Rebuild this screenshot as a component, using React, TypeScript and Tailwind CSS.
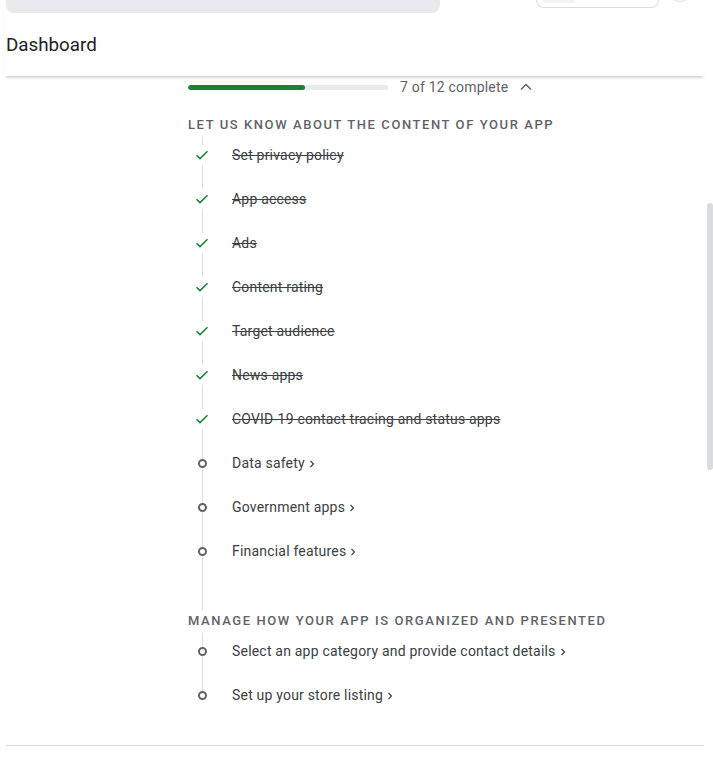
import React from "react";

type Item = { label: string; done: boolean };

const section1: Item[] = [
  { label: "Set privacy policy", done: true },
  { label: "App access", done: true },
  { label: "Ads", done: true },
  { label: "Content rating", done: true },
  { label: "Target audience", done: true },
  { label: "News apps", done: true },
  { label: "COVID-19 contact tracing and status apps", done: true },
  { label: "Data safety", done: false },
  { label: "Government apps", done: false },
  { label: "Financial features", done: false },
];

const section2: Item[] = [
  { label: "Select an app category and provide contact details", done: false },
  { label: "Set up your store listing", done: false },
];

function Check() {
  return (
    <svg width="14" height="12" viewBox="0 0 14 12" className="my-[2px]">
      <path d="M1.5 6.2 L5 9.6 L12.5 2.2" fill="none" stroke="#188038" strokeWidth="1.5" />
    </svg>
  );
}

function Circle() {
  return <div className="w-[9px] h-[9px] rounded-full border-2 border-[#5f6368] bg-white" />;
}

function Chev() {
  return (
    <svg width="8" height="10" viewBox="0 0 8 10" className="ml-[3px] mt-[1px]">
      <path d="M2.5 2 L5.5 5 L2.5 8" fill="none" stroke="#3c4043" strokeWidth="1.2" />
    </svg>
  );
}

function Row({ item, first, last }: { item: Item; first?: boolean; last?: boolean }) {
  return (
    <div className="flex h-[44px]">
      <div className="w-[28px] flex flex-col items-center">
        <div
          className={`w-px flex-1 ${
            first ? "bg-[linear-gradient(to_bottom,transparent_4px,#dadce0_4px)]" : "bg-[#dadce0]"
          } ${item.done ? "mb-[2px]" : ""}`}
        />
        {item.done ? <Check /> : <Circle />}
        <div className={`w-px flex-1 ${item.done ? "mt-[2px]" : ""} ${last ? "bg-transparent" : "bg-[#dadce0]"}`} />
      </div>
      <div className="ml-[16px] flex items-center text-[14px] tracking-[0.2px] text-[#3c4043]">
        {item.done ? (
          <span className="line-through decoration-[#3c4043]">{item.label}</span>
        ) : (
          <>
            <span>{item.label}</span>
            <Chev />
          </>
        )}
      </div>
    </div>
  );
}

export default function App() {
  return (
    <div
      className="w-[713px] h-[768px] relative overflow-hidden bg-white"
      style={{ fontFamily: "Roboto, 'Noto Sans', sans-serif" }}
    >
      {/* header */}
      <div className="relative z-10 ml-[4px] w-[701px] h-[76px] bg-white shadow-[0_3px_3px_-2px_rgba(60,64,67,0.35)]">
        <div className="flex items-start h-[14px]">
          <div className="ml-[2px] w-[434px] h-[13px] rounded-b-[8px] bg-[#e8eaed]" />
          <div className="ml-[96px] w-[123px] h-[8px] rounded-b-[8px] border border-t-0 border-[#dadce0] flex items-start">
            <div className="ml-[6px] w-[32px] h-[3px] rounded-b-[3px] bg-[#f1f3f4]" />
          </div>
          <div className="ml-[9px] -mt-[22px] w-[24px] h-[24px] rounded-full border border-[#dadce0]" />
        </div>
        <div className="pl-[2px] mt-[20px] text-[18.8px] leading-[22px] text-[#202124]">Dashboard</div>
      </div>

      {/* content */}
      <div className="pl-[188px]">
        <div className="flex items-center h-[22px]">
          <div className="w-[200px] h-[5px] rounded-full bg-[#e8eaed] overflow-hidden">
            <div className="h-full bg-[#188038] rounded-full" style={{ width: `${(7 / 12) * 200}px` }} />
          </div>
          <span className="ml-[12px] text-[14px] tracking-[0.2px] text-[#5f6368]">7 of 12 complete</span>
          <svg width="14" height="10" viewBox="0 0 14 10" className="ml-[11px]">
            <path d="M2 7.5 L7 2.5 L12 7.5" fill="none" stroke="#5f6368" strokeWidth="1.5" />
          </svg>
        </div>

        <div className="mt-[19px] h-[16px] leading-[16px] text-[13px] font-medium tracking-[1.58px] text-[#5f6368]">
          LET US KNOW ABOUT THE CONTENT OF YOUR APP
        </div>
        <div className="flex flex-col">
          {section1.map((it, i) => (
            <Row key={it.label} item={it} first={i === 0} />
          ))}
          <div className="flex h-[37px]">
            <div className="w-[28px] flex justify-center">
              <div className="w-px h-full bg-[#dadce0]" />
            </div>
          </div>
        </div>

        <div className="mt-[3px] h-[16px] leading-[16px] text-[13px] font-medium tracking-[1.58px] text-[#5f6368]">
          MANAGE HOW YOUR APP IS ORGANIZED AND PRESENTED
        </div>
        <div className="flex flex-col">
          {section2.map((it, i) => (
            <Row key={it.label} item={it} first={i === 0} last={i === section2.length - 1} />
          ))}
        </div>
      </div>

      <div className="mt-[28px] ml-[6px] w-[698px] border-t border-[#dadce0]" />

      {/* scrollbar */}
      <div className="absolute left-[707px] top-[203px] w-[6px] h-[267px] rounded-full bg-[#dadce0]" />
    </div>
  );
}
